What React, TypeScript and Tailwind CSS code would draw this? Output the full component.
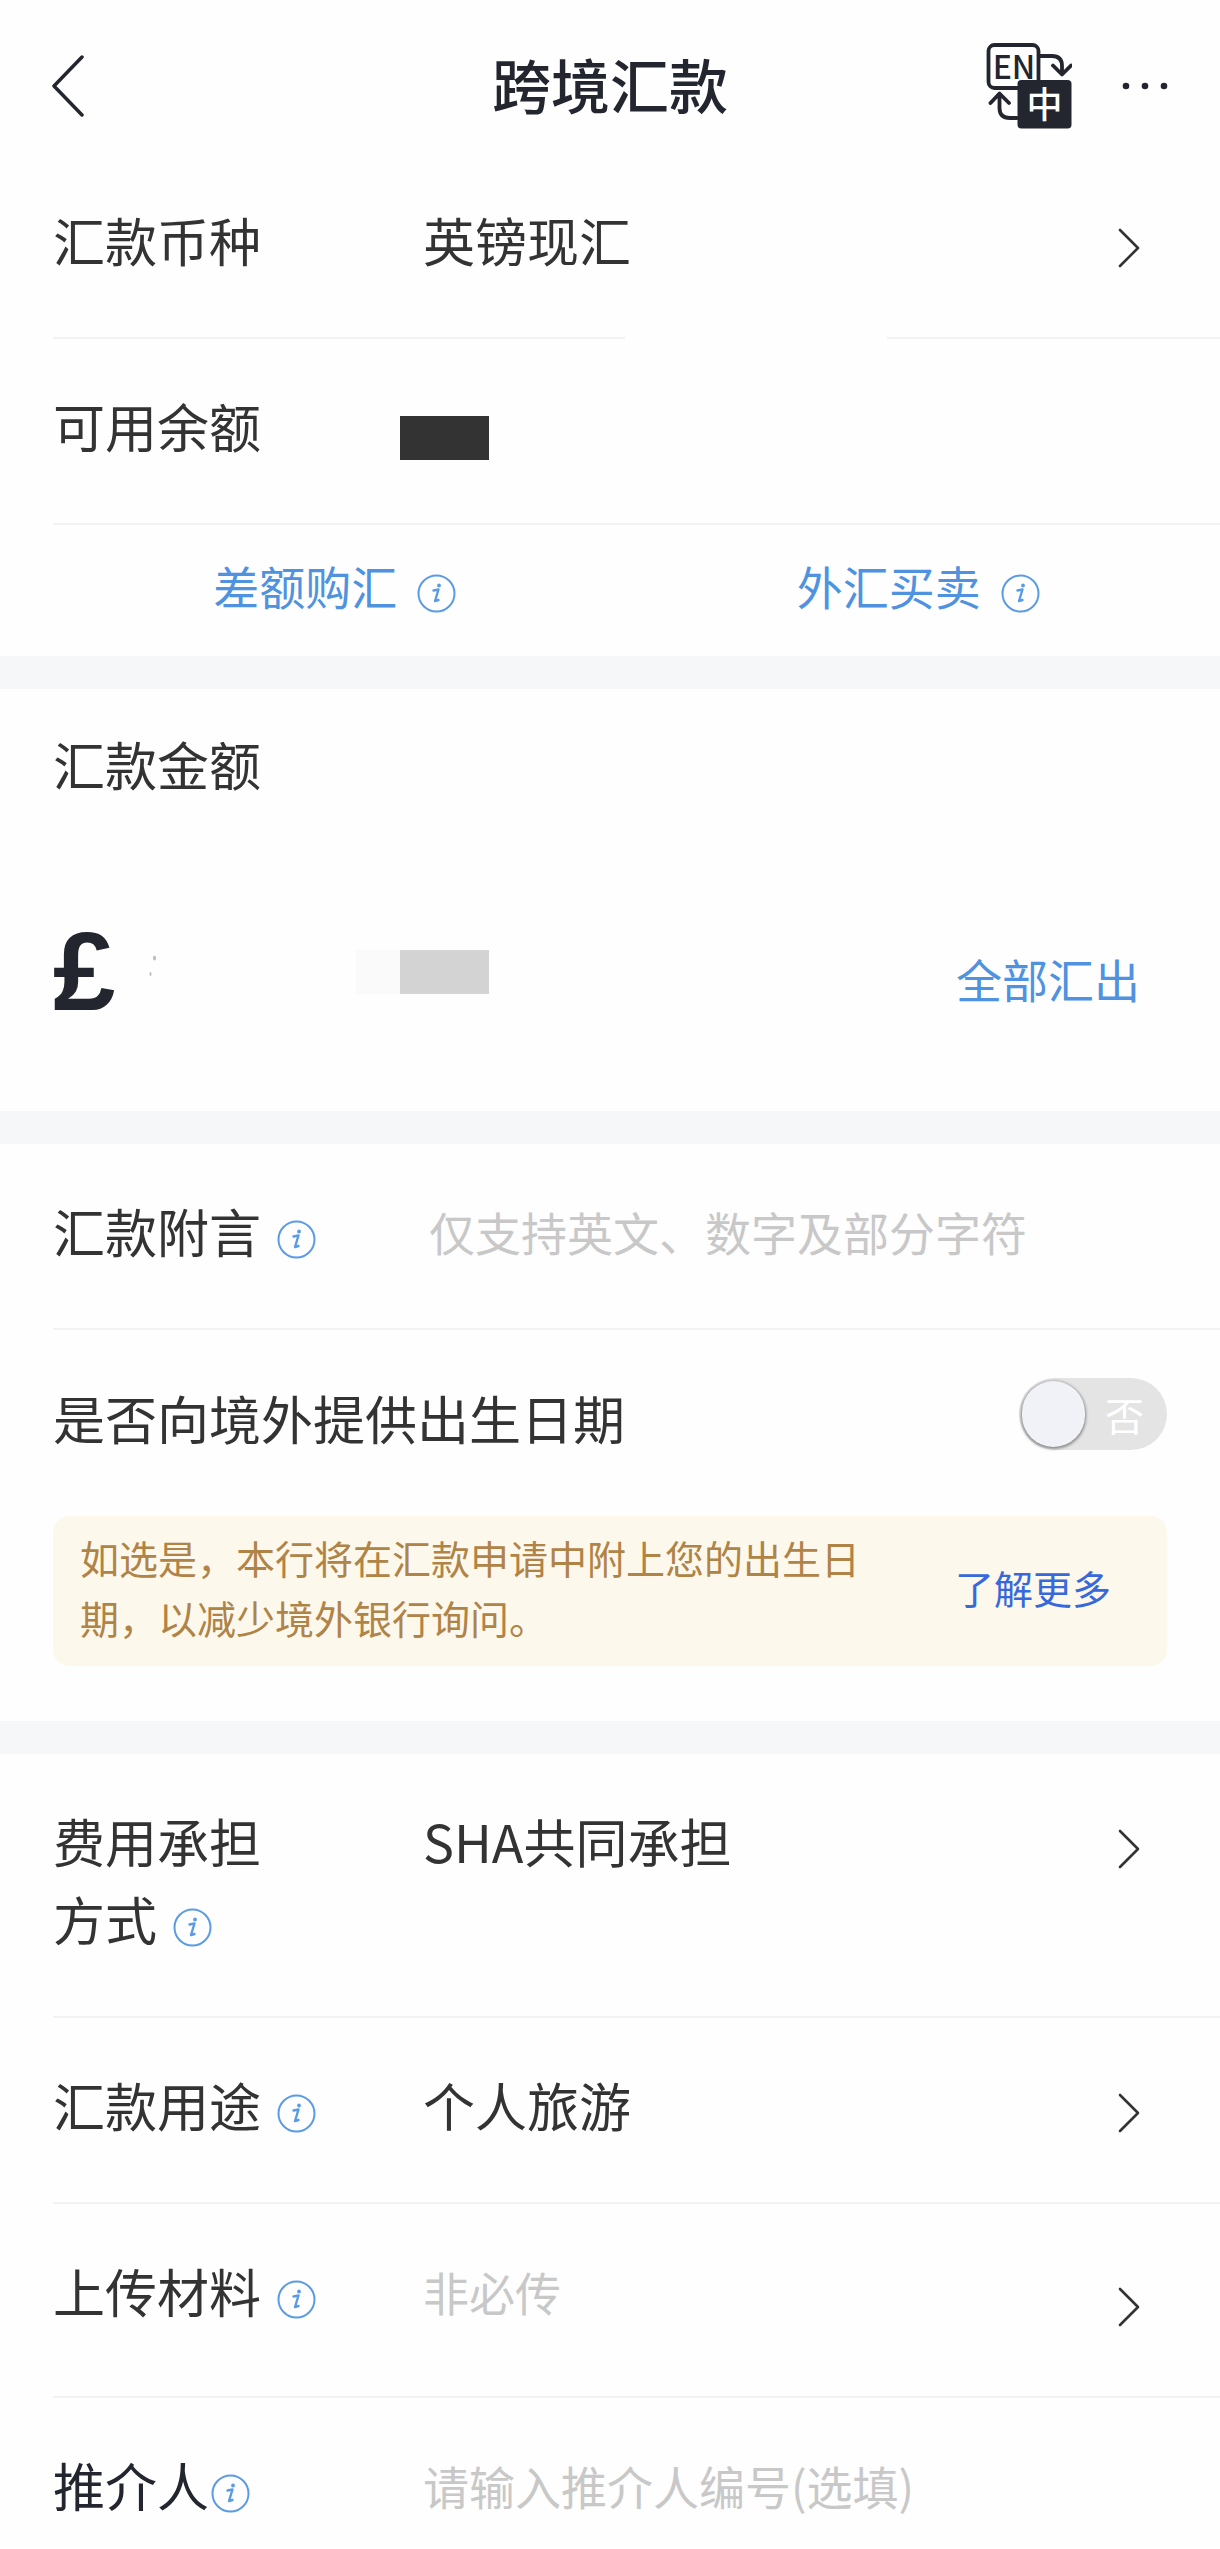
import { useState, type ReactNode } from "react"
import { clsx } from "clsx"

function BackIcon() {
  return (
    <svg width="34" height="64" viewBox="0 0 34 64" fill="none" aria-hidden>
      <path
        d="M30 3L2 32L30 61"
        stroke="#23262f"
        strokeWidth="3.500"
        strokeLinecap="round"
        strokeLinejoin="round"
      />
    </svg>
  )
}

function ChevronIcon() {
  return (
    <svg width="22" height="40" viewBox="0 0 22 40" fill="none" aria-hidden>
      <path
        d="M2 2L20 20L2 38"
        stroke="#333"
        strokeWidth="2.600"
        strokeLinecap="round"
        strokeLinejoin="round"
      />
    </svg>
  )
}

function MoreIcon() {
  return (
    <svg width="46" height="10" viewBox="0 0 46 10" fill="#23262f" aria-hidden>
      <circle cx="4" cy="5" r="3.300" />
      <circle cx="23" cy="5" r="3.300" />
      <circle cx="42" cy="5" r="3.300" />
    </svg>
  )
}

function LanguageIcon() {
  return (
    <svg
      width="86"
      height="86"
      viewBox="0 0 86 86"
      fill="none"
      stroke="#23262f"
      strokeWidth="3.800"
      strokeLinecap="round"
      strokeLinejoin="round"
      aria-hidden
    >
      <rect x="2.500" y="2" width="50" height="43" rx="6" />
      <path d="M54 13H66Q76 13 76 23V31M67 22.500L76 31.500L85 22.500" />
      <path d="M31 75H24Q13.500 75 13.500 65V51M4.500 60L13.500 50.500L23 60" />
      <rect
        x="31.500"
        y="37"
        width="54"
        height="48.500"
        rx="4"
        fill="#23262f"
        stroke="none"
      />
      <g fill="#23262f" stroke="none" fontWeight="500" textAnchor="middle">
        <text x="28" y="36" fontSize="32">
          EN
        </text>
        <text x="58.500" y="75" fontSize="36" fill="#fff">
          中
        </text>
      </g>
    </svg>
  )
}

function InfoButton({ about }: { about: string }) {
  return (
    <button type="button" aria-label={`${about}说明`} className="mt-4 shrink-0">
      <svg width="39" height="39" viewBox="0 0 39 39" fill="none" aria-hidden>
        <g stroke="#5a9be6" strokeLinecap="round" strokeLinejoin="round">
          <circle cx="19.500" cy="19.500" r="18" strokeWidth="2" />
          <path d="M16.500 16.500L21.500 15.500L18 27L21.500 26" strokeWidth="2.400" />
        </g>
        <circle cx="22" cy="11.500" r="1.900" fill="#5a9be6" />
      </svg>
    </button>
  )
}

function Row({
  label,
  htmlFor,
  info,
  tight,
  className,
  children,
}: {
  label: ReactNode
  htmlFor?: string
  info?: string
  tight?: boolean
  className?: string
  children?: ReactNode
}) {
  return (
    <div className={clsx("ml-[53px] flex items-start pt-12", className)}>
      <div className="w-[370px] shrink-0">
        {htmlFor ? <label htmlFor={htmlFor}>{label}</label> : <span>{label}</span>}
        {info && (
          <span
            className={clsx(
              "inline-flex h-[78px] items-center align-bottom",
              tight ? "ml-0.5" : "ml-4"
            )}
          >
            <InfoButton about={info} />
          </span>
        )}
      </div>
      {children}
    </div>
  )
}

function SelectValue({
  children,
  placeholder,
}: {
  children: ReactNode
  placeholder?: boolean
}) {
  return (
    <button
      type="button"
      className="flex h-[78px] flex-1 items-center justify-between pr-20 text-left"
    >
      <span className={clsx(placeholder && "text-[46px] text-[#c8c8c8]")}>
        {children}
      </span>
      <span className={placeholder ? "mt-8" : "mt-4"}>
        <ChevronIcon />
      </span>
    </button>
  )
}

function Band() {
  return <div className="h-[33px] bg-[#f6f7f9]" />
}

const rowLine = "border-b-2 border-[#f2f2f2] pb-[58px]"
const inputStyle =
  "h-[78px] min-w-0 flex-1 bg-transparent text-[46px] outline-none placeholder:text-[#c8c8c8]"

export default function App() {
  const [provideBirthday, setProvideBirthday] = useState(false)

  return (
    <main className="w-full overflow-hidden bg-[#fefefe] font-['Noto_Sans_CJK_SC',sans-serif] text-[52px] leading-[78px] text-[#333]">
      <header className="grid grid-cols-[1fr_auto_1fr] items-center px-[52px] pt-[43px] pb-6 text-[#23262f]">
        <button type="button" aria-label="返回" className="justify-self-start">
          <BackIcon />
        </button>
        <h1 className="mb-1 text-[59px] font-medium">跨境汇款</h1>
        <div className="flex items-center gap-[50px] justify-self-end">
          <button type="button" aria-label="切换语言">
            <LanguageIcon />
          </button>
          <button type="button" aria-label="更多">
            <MoreIcon />
          </button>
        </div>
      </header>

      <section>
        <Row label="汇款币种" className="pb-[58px]">
          <SelectValue>英镑现汇</SelectValue>
        </Row>
        <div className="ml-[53px] flex justify-between">
          <div className="h-0.5 w-[49%] bg-[#f2f2f2]" />
          <div className="h-0.5 w-[28.5%] bg-[#f2f2f2]" />
        </div>
        <div className={clsx("ml-[53px] flex items-start pt-12", rowLine)}>
          <span className="w-[347px]">可用余额</span>
          <div className="flex h-[78px] items-center">
            <div className="mt-6 h-11 w-[89px] bg-[#333]" />
          </div>
        </div>
        <div className="ml-[53px] grid grid-cols-2 pt-[21px] pb-8 text-[46px] text-[#4f92e0]">
          <div className="flex items-center justify-center gap-5 pr-5">
            <a href="#purchase">差额购汇</a>
            <InfoButton about="差额购汇" />
          </div>
          <div className="flex items-center justify-center gap-5 pr-5">
            <a href="#exchange">外汇买卖</a>
            <InfoButton about="外汇买卖" />
          </div>
        </div>
      </section>

      <Band />

      <section className="pt-9 pb-[61px]">
        <h2 className="ml-[53px]">汇款金额</h2>
        <div className="mt-[91px] ml-[53px] flex h-[156px] items-center pr-20">
          <span className="w-24 font-['Liberation_Sans_Narrow','Liberation_Sans',sans-serif] text-[112px] font-bold text-[#23262f]">
            £
          </span>
          <svg width="8" height="34" viewBox="0 0 8 34" fill="#bbb" aria-hidden>
            <ellipse cx="5.500" cy="3" rx="1.500" ry="2.500" />
            <ellipse cx="1.500" cy="19" rx="1" ry="2" />
          </svg>
          <div className="ml-[199px] h-11 w-11 bg-[#fafafa]" />
          <div className="h-11 w-[89px] bg-[#d3d3d3]" />
          <button type="button" className="mt-3 ml-auto text-[46px] text-[#4f92e0]">
            全部汇出
          </button>
        </div>
      </section>

      <Band />

      <section>
        <Row label="汇款附言" htmlFor="remark" info="汇款附言" className={rowLine}>
          <input
            id="remark"
            className={clsx("pl-1.5", inputStyle)}
            placeholder="仅支持英文、数字及部分字符"
          />
        </Row>
        <div className="mx-[53px] flex items-center justify-between pt-12 pb-[58px]">
          <label htmlFor="birthday">是否向境外提供出生日期</label>
          <div
            className={clsx(
              "relative mb-2 flex h-[72px] w-[148px] items-center justify-between rounded-full p-[3px] text-[39px] text-white",
              provideBirthday ? "flex-row-reverse bg-[#4f92e0]" : "bg-[#e4e4e4]"
            )}
          >
            <input
              id="birthday"
              type="checkbox"
              role="switch"
              checked={provideBirthday}
              onChange={(e) => setProvideBirthday(e.target.checked)}
              className="absolute inset-0 size-full cursor-pointer opacity-0"
            />
            <span className="size-[66px] rounded-full bg-[#f0f2f8] shadow-[0_1px_3px_1px_rgba(0,0,0,0.4)]" />
            <span className="px-5">{provideBirthday ? "是" : "否"}</span>
          </div>
        </div>
        <div className="mx-[53px] mb-[55px] flex items-center justify-between rounded-2xl bg-[#fcf8ec] pt-[11px] pr-14 pb-[19px] pl-[27px] text-[39px] leading-[60px] text-[#b08347]">
          <p className="w-[800px]">
            如选是，本行将在汇款申请中附上您的出生日期，以减少境外银行询问。
          </p>
          <a href="#more" className="shrink-0 text-[#3769dc]">
            了解更多
          </a>
        </div>
      </section>

      <Band />

      <section>
        <Row
          label={
            <>
              费用承担
              <br />
              方式
            </>
          }
          info="费用承担方式"
          className={rowLine}
        >
          <SelectValue>SHA共同承担</SelectValue>
        </Row>
        <Row label="汇款用途" info="汇款用途" className={rowLine}>
          <SelectValue>个人旅游</SelectValue>
        </Row>
        <Row
          label="上传材料"
          info="上传材料"
          className="border-b-2 border-[#f2f2f2] pb-[66px]"
        >
          <SelectValue placeholder>非必传</SelectValue>
        </Row>
        <Row
          label={<span className="text-[#23262f]">推介人</span>}
          htmlFor="referrer"
          info="推介人"
          tight
          className="pb-6"
        >
          <input
            id="referrer"
            className={inputStyle}
            placeholder="请输入推介人编号(选填)"
          />
        </Row>
      </section>
    </main>
  )
}
